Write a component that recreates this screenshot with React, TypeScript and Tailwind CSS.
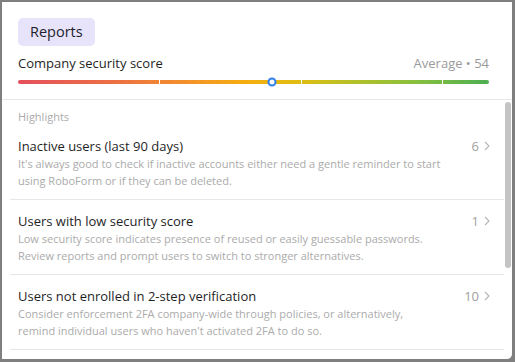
// Reports / security score card
const items = [
  {
    title: "Inactive users (last 90 days)",
    count: 6,
    lines: [
      "It's always good to check if inactive accounts either need a gentle reminder to start",
      "using RoboForm or if they can be deleted.",
    ],
  },
  {
    title: "Users with low security score",
    count: 1,
    lines: [
      "Low security score indicates presence of reused or easily guessable passwords.",
      "Review reports and prompt users to switch to stronger alternatives.",
    ],
  },
  {
    title: "Users not enrolled in 2-step verification",
    count: 10,
    lines: [
      "Consider enforcement 2FA company-wide through policies, or alternatively,",
      "remind individual users who haven't activated 2FA to do so.",
    ],
  },
];

const Chevron = () => (
  <svg width="6" height="10" viewBox="0 0 6 10" fill="none">
    <path d="M1 1l4 4-4 4" stroke="#b5b5b5" strokeWidth="1.1" />
  </svg>
);

const ScoreBar = ({ score }: { score: number }) => (
  <div className="relative mt-[7px] h-[4px] w-full rounded-full bg-[linear-gradient(to_right,#e4505c_0%,#ec6f45_20%,#f38f2c_35%,#f6ad10_48%,#dfbd12_60%,#b8c027_70%,#86bf3f_85%,#4dae52_100%)]">
    <div className="absolute left-[30%] top-0 h-full w-px bg-white" />
    <div className="absolute left-[60%] top-0 h-full w-px bg-white" />
    <div className="absolute left-[90%] top-0 h-full w-px bg-white" />
    <div
      className="absolute top-1/2 h-[9px] w-[9px] -translate-x-1/2 -translate-y-1/2 rounded-full border-2 border-[#2f7ff0] bg-white"
      style={{ left: `${score}%` }}
    />
  </div>
);

export default function App() {
  return (
    <div className="h-[362px] w-[515px] overflow-hidden bg-[#7f7f7f] font-['Open_Sans',sans-serif]">
      <div className="ml-[2px] mt-[2px] flex h-[357px] w-[510px] flex-col rounded-br-[5px] bg-white">
        <div className="pl-4 pr-[23px] pt-4 pb-[15px]">
          <div className="inline-flex h-[28px] items-center rounded-[5px] bg-[#e7e3fb] px-[12px] text-[14.5px] text-[#1e1e2a]">
            Reports
          </div>
          <div className="mt-[7px] flex items-center justify-between text-[13px] leading-[20px]">
            <span className="text-[#1f1f1f]">Company security score</span>
            <span className="text-[#9a9a9a]">Average • 54</span>
          </div>
          <ScoreBar score={54} />
        </div>
        <div className="h-px bg-[#e9e9e9]" />
        <div className="relative flex-1 overflow-hidden">
          <div className="absolute right-[1px] top-[2px] h-[166px] w-[6px] rounded-full bg-[#c4c4c4]" />
          <div className="px-2 pt-[9px]">
            <div className="pl-2 text-[11px] leading-[16px] text-[#ababab]">
              Highlights
            </div>
            {items.map((item) => (
              <div
                key={item.title}
                className="border-b border-[#e6e6e6] pb-[10px] pl-2 pr-[14px] pt-[11px]"
              >
                <div className="flex items-center justify-between text-[13px] leading-[20px]">
                  <span className="text-[#1f1f1f]">{item.title}</span>
                  <span className="flex items-center gap-[5px] text-[#a0a0a0]">
                    {item.count}
                    <Chevron />
                  </span>
                </div>
                <div className="text-[11px] leading-[16.5px] text-[#ababab]">
                  {item.lines.map((line) => (
                    <div key={line}>{line}</div>
                  ))}
                </div>
              </div>
            ))}
          </div>
        </div>
      </div>
    </div>
  );
}
